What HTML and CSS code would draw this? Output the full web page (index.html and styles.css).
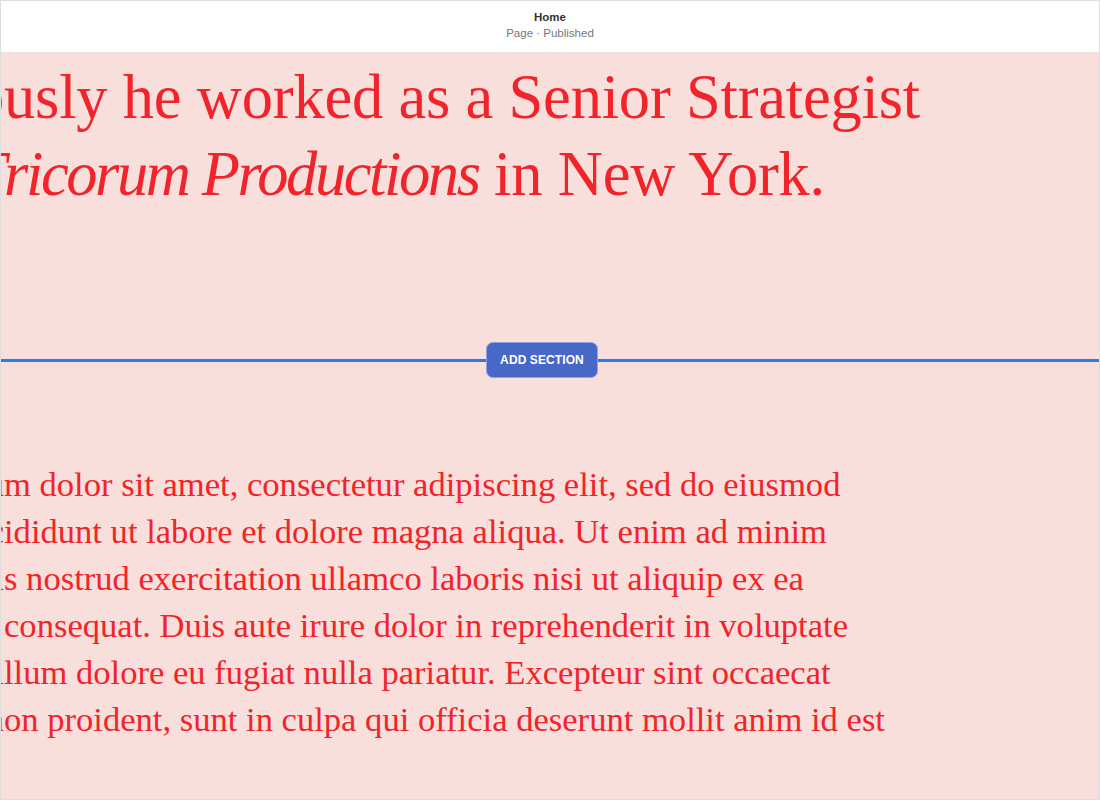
FILE: index.html
```html
<!DOCTYPE html>
<html lang="en">
<head>
<meta charset="utf-8">
<title>Home</title>
<link rel="stylesheet" href="styles.css">
</head>
<body>
<div class="frame">
  <header class="topbar">
    <div class="title">Home</div>
    <div class="status">Page · Published</div>
  </header>
  <main class="page">
    <section class="hero">
      <h1 class="headline">
        <span class="line"><span class="pre">Previo</span>usly he worked as a Senior Strategist</span>
        <span class="line"><span class="pre">at <em>T</em></span><em>ricorum Productions</em>&nbsp;in New York.</span>
      </h1>
    </section>
    <div class="divider">
      <button class="add-section" type="button">ADD SECTION</button>
    </div>
    <section class="body">
      <p class="para">
        <span class="line"><span class="pre">Lorem ipsu</span>m dolor sit amet, consectetur adipiscing elit, sed do eiusmod</span>
        <span class="line"><span class="pre">tempor inc</span>ididunt ut labore et dolore magna aliqua. Ut enim ad minim</span>
        <span class="line"><span class="pre">veniam, qui</span>s nostrud exercitation ullamco laboris nisi ut aliquip ex ea</span>
        <span class="line"><span class="pre">commodo&nbsp;</span>consequat. Duis aute irure dolor in reprehenderit in voluptate</span>
        <span class="line"><span class="pre">velit esse ci</span>llum dolore eu fugiat nulla pariatur. Excepteur sint occaecat</span>
        <span class="line"><span class="pre">cupidatat n</span>on proident, sunt in culpa qui officia deserunt mollit anim id est</span>
      </p>
    </section>
  </main>
</div>
</body>
</html>
```

FILE: styles.css
```css
* { box-sizing: border-box; }
html, body { margin: 0; padding: 0; }
body {
  width: 1100px;
  height: 800px;
  overflow: hidden;
  background: #ffffff;
}
.frame {
  width: 1100px;
  height: 800px;
  border: 1px solid #dedede;
  display: flex;
  flex-direction: column;
  overflow: hidden;
}
.topbar {
  height: 52px;
  flex: 0 0 52px;
  background: #ffffff;
  border-bottom: 1px solid #e6e2e0;
  display: flex;
  flex-direction: column;
  align-items: center;
  justify-content: center;
  font-family: "Liberation Sans", Arial, sans-serif;
  gap: 2px;
  padding-bottom: 3px;
}
.title {
  font-size: 11.5px;
  font-weight: 600;
  color: #333333;
  line-height: 14px;
}
.status {
  font-size: 11.5px;
  color: #777777;
  line-height: 14px;
}
.page {
  flex: 1;
  background: #f8dfdc;
  display: flex;
  flex-direction: column;
  color: #f0242a;
  font-family: "Liberation Serif", "Times New Roman", serif;
}
.hero {
  height: 306px;
  flex: 0 0 306px;
  padding-top: 6px;
}
.headline {
  margin: 0;
  font-weight: 400;
  font-size: 62.5px;
  line-height: 77px;
  letter-spacing: -0.2px;
}
.headline em {
  letter-spacing: -2.4px;
}
.line {
  display: flex;
  white-space: nowrap;
  padding-left: 3px;
}
.pre {
  width: 0;
  display: flex;
  justify-content: flex-end;
  white-space: pre;
}
em { font-style: italic; }
.divider {
  position: relative;
  height: 3px;
  flex: 0 0 3px;
  background: #2a7de8;
}
.add-section {
  position: absolute;
  left: 485px;
  top: -17px;
  width: 112px;
  height: 36px;
  border-radius: 7px;
  border: 1px solid #8ea2e2;
  background: #4768c6;
  color: #ffffff;
  font-family: "Liberation Sans", Arial, sans-serif;
  font-weight: 700;
  font-size: 12px;
  letter-spacing: 0.1px;
  padding: 0;
  cursor: pointer;
}
.body {
  padding-top: 99px;
}
.para {
  margin: 0;
  font-size: 34.6px;
  line-height: 47px;
}
```
